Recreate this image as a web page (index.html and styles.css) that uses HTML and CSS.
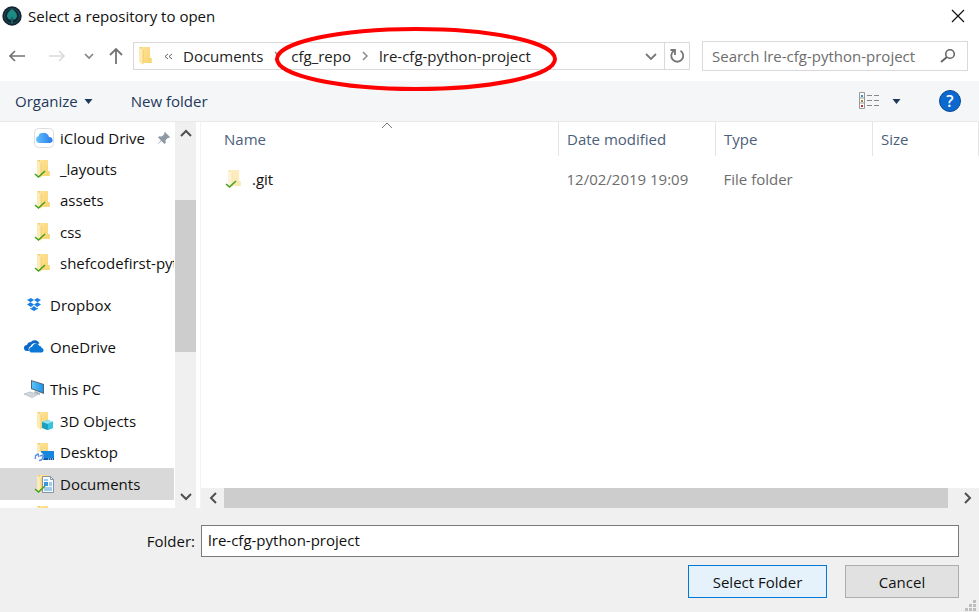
FILE: index.html
```html
<!DOCTYPE html>
<html lang="en">
<head>
<meta charset="utf-8">
<title>Select a repository to open</title>
<link rel="stylesheet" href="styles.css">
</head>
<body>
<svg class="defs" aria-hidden="true">
  <defs>
    <linearGradient id="fold" x1="0" x2="1" y1="0" y2="1"><stop offset="0" stop-color="#ffe29a"/><stop offset="1" stop-color="#f8d46c"/></linearGradient>
    <linearGradient id="cloud" x1="0" x2="1"><stop offset="0" stop-color="#62c0fb"/><stop offset="1" stop-color="#2a7de9"/></linearGradient>
    <linearGradient id="screen" x1="0" x2="1"><stop offset="0" stop-color="#5cc4fa"/><stop offset="1" stop-color="#1e93e8"/></linearGradient>
  </defs>
  <symbol id="folder" viewBox="0 0 20 20">
    <path d="M3 1h11v11h1.500v5H5z" fill="#f3cf70"/>
    <path d="M6 1h8v11h1.500v5H6z" fill="url(#fold)"/>
    <path d="M3 1l4 3v15l-4-3z" fill="#fdebb5"/>
    <path d="M7 4v14" stroke="#edc968" stroke-width=".8"/>
  </symbol>
  <symbol id="tick" viewBox="0 0 20 20"><path d="M1 15l3.500 3 6.500-6" fill="none" stroke="#43a01c" stroke-width="1.500"/></symbol>
</svg>
<div class="dialog">
  <header class="titlebar">
    <svg class="logo" viewBox="0 0 20 20" aria-hidden="true"><circle cx="10" cy="10" r="9.700" fill="#142532"/><circle cx="10" cy="10" r="7.500" fill="none" stroke="#1a5058"/><path d="M10 3c3 2 5 4 5 7 0 2-2 4-4 4v3H9v-3c-2 0-4-2-4-4 0-3 2-5 5-7z" fill="#1c8b83"/><path d="M10 11v6M8 13v3M12 13v3" stroke="#142532" stroke-width=".8"/></svg>
    <h1>Select a repository to open</h1>
    <button class="close" aria-label="Close"><svg width="14" height="14" viewBox="0 0 14 14"><path d="M1 1l12 12M13 1L1 13" fill="none" stroke="#111" stroke-width="1.2"/></svg></button>
  </header>

  <div class="navrow">
    <div class="history">
      <button aria-label="Back"><svg width="18" height="14" viewBox="0 0 18 14"><path d="M17 7H2M7 2L2 7l5 5" fill="none" stroke="#747474" stroke-width="1.7"/></svg></button>
      <button aria-label="Forward"><svg width="18" height="14" viewBox="0 0 18 14"><path d="M1 7h15M11 2l5 5-5 5" fill="none" stroke="#dadada" stroke-width="1.7"/></svg></button>
      <button class="recent" aria-label="Recent locations"><svg width="10" height="8" viewBox="0 0 10 8"><path d="M1 2l4 4 4-4" fill="none" stroke="#858585" stroke-width="1.7"/></svg></button>
      <button class="up" aria-label="Up"><svg width="16" height="18" viewBox="0 0 16 18"><path d="M8 17V2M2 8l6-6 6 6" fill="none" stroke="#747474" stroke-width="1.8"/></svg></button>
    </div>
    <nav class="address" aria-label="Path">
      <svg class="address-icon" viewBox="0 0 20 20" aria-hidden="true"><use href="#folder"/></svg>
      <button class="overflow" aria-label="More folders"><svg width="9" height="7" viewBox="0 0 9 7"><path d="M4 1L1 3.500 4 6M8 1L5 3.500 8 6" fill="none" stroke="#666"/></svg></button>
      <a href="#">Documents</a>
      <svg class="sep" viewBox="0 0 6 10" aria-hidden="true"><path d="M1 1l4 4-4 4" fill="none" stroke="#888" stroke-width="1.5"/></svg>
      <a href="#">cfg_repo</a>
      <svg class="sep" viewBox="0 0 6 10" aria-hidden="true"><path d="M1 1l4 4-4 4" fill="none" stroke="#888" stroke-width="1.5"/></svg>
      <a href="#">lre-cfg-python-project</a>
      <button class="drop" aria-label="Previous locations"><svg width="12" height="9" viewBox="0 0 12 9"><path d="M1 2l5 5 5-5" fill="none" stroke="#777" stroke-width="1.8"/></svg></button>
      <button class="refresh" aria-label="Refresh"><svg width="16" height="16" viewBox="0 0 16 16"><path d="M11.500 2.700a6 6 0 1 1-6.500 0M1.500 2H6v5" fill="none" stroke="#777" stroke-width="1.800"/></svg></button>
      <svg class="highlight" viewBox="0 0 284 64" aria-hidden="true"><ellipse cx="142" cy="32" rx="139" ry="30" fill="none" stroke="#fe0000" stroke-width="4"/></svg>
    </nav>
    <form class="search">
      <input type="text" aria-label="Search" placeholder="Search lre-cfg-python-project">
      <button type="button" aria-label="Search"><svg width="16" height="16" viewBox="0 0 16 16"><circle cx="10" cy="6" r="4.300" fill="none" stroke="#666" stroke-width="1.6"/><path d="M7 9l-6 5" stroke="#666" stroke-width="2"/></svg></button>
    </form>
  </div>

  <div class="toolbar">
    <button class="organize">Organize<svg class="caret" viewBox="0 0 8 5" aria-hidden="true"><path d="M0 0h8L4 5z" fill="#1e395b"/></svg></button>
    <button>New folder</button>
    <button class="view" aria-label="Change view"><svg width="20" height="18" viewBox="0 0 20 18"><path d="M.5.5h5v16h-5zM.5 6h5M.5 11h5" fill="#fff" stroke="#999"/><path d="M2 3h2v2H2z" fill="#3a8cc8"/><path d="M2 8h2v2H2z" fill="#a18a2a"/><path d="M2 13h2v2H2z" fill="#c03030"/><path d="M8 3.500h5M15 3.500h5M8 8.500h5M15 8.500h5M8 13.500h5M15 13.500h5" stroke="#888" stroke-width="1.2"/></svg></button>
    <button class="viewmenu" aria-label="View options"><svg class="caret" viewBox="0 0 8 5"><path d="M0 0h8L4 5z" fill="#1e395b"/></svg></button>
    <button class="help" aria-label="Help">?</button>
  </div>

  <main class="body">
    <nav class="tree" aria-label="Folders">
      <ul class="group children">
        <li><svg class="ico" viewBox="0 0 20 20" aria-hidden="true"><rect x=".5" y=".5" width="19" height="19" rx="4" fill="#fff" stroke="#dedede"/><path d="M5 15a3.500 3.500 0 0 1-.5-6.800A4 4 0 0 1 9 5a5 5 0 0 1 6 4 3 3 0 0 1 1 6z" fill="url(#cloud)"/></svg><a href="#">iCloud Drive</a><svg class="pin" viewBox="0 0 14 14" aria-hidden="true"><path d="M8 1l5 5-1 1-1-.3-2.500 2.500.3 2.500L7.500 13 4.500 10 1 13 .8 12.800 4 9.300 1 6.500 2.300 5.200l2.500.3L7.500 3 7 2z" fill="#8d99a5"/></svg></li>
        <li><svg class="ico" viewBox="0 0 20 20" aria-hidden="true"><use href="#folder"/><use href="#tick"/></svg><a href="#">_layouts</a></li>
        <li><svg class="ico" viewBox="0 0 20 20" aria-hidden="true"><use href="#folder"/><use href="#tick"/></svg><a href="#">assets</a></li>
        <li><svg class="ico" viewBox="0 0 20 20" aria-hidden="true"><use href="#folder"/><use href="#tick"/></svg><a href="#">css</a></li>
        <li><svg class="ico" viewBox="0 0 20 20" aria-hidden="true"><use href="#folder"/><use href="#tick"/></svg><a href="#">shefcodefirst-python</a></li>
      </ul>
      <ul class="group">
        <li><svg class="ico" viewBox="0 0 20 20" aria-hidden="true"><path d="M7 3l3 2-3.500 2.300L3 5zM13 3l4 2-3.500 2.300L10 5zM3 9.500l3.500-2.200L10 9.600 7 12zM17 9.500l-3.500-2.200L10 9.600l3 2.400zM6 12.800l1 .6 3-2.300 3 2.300 1-.6v1L10 16l-4-2.200z" fill="#177fe5"/></svg><a href="#">Dropbox</a></li>
      </ul>
      <ul class="group">
        <li><svg class="ico" viewBox="0 0 20 20" aria-hidden="true"><path d="M5 14H3a3 3 0 0 1 0-6 4 4 0 0 1 4-3 5 5 0 0 1 8.500 1.500L13 7c-3-2-6 0-6 2-2 .5-3 3-2 5z" fill="#0a67c5"/><path d="M8 15.500a2.800 2.800 0 0 1 0-5.600A4 4 0 0 1 15.500 9c2 0 2 1.500 2 2 3 .5 2.500 4.500 0 4.500z" fill="#0a78d7"/></svg><a href="#">OneDrive</a></li>
      </ul>
      <ul class="group">
        <li><svg class="ico" viewBox="0 0 20 20" aria-hidden="true"><path d="M7 1l13 4v10L7 10z" fill="#506574"/><path d="M8 2.200l11 3.500v7.700L8 9.300z" fill="url(#screen)"/><path d="M11 12l5 2v2l-6-2z" fill="#a9b4bb"/><path d="M0 15l6-2 8 2.500-6 3z" fill="#dce2e6" stroke="#a9b4bb" stroke-width=".7"/><path d="M2 15.300l7 2M5 14.300l7 2" stroke="#b7c1c7" stroke-width=".6"/></svg><a href="#">This PC</a></li>
      </ul>
      <ul class="group children after">
        <li><svg class="ico" viewBox="0 0 20 20" aria-hidden="true"><use href="#folder"/><path d="M8 11l6-2 5 2v6l-6 2-5-2z" fill="#1d9fc2"/><path d="M8 11l6-2 5 2-5 2z" fill="#8ee5f3"/><path d="M14 13l5-2v6l-5 2z" fill="#38c1dc"/></svg><a href="#">3D Objects</a></li>
        <li><svg class="ico" viewBox="0 0 20 20" aria-hidden="true"><use href="#folder"/><path d="M7 9h13v9H7z" fill="#1686df"/><path d="M7 16h13v2H7z" fill="#0759a3"/><path d="M14 17h1M16 17h1M18 17h1" stroke="#fff"/><circle cx="5" cy="15" r="5" fill="#fff"/><path d="M1.500 17a4 4 0 0 1 2.500-5M5 18.500a4 4 0 0 0 4-4.500M1 14l3-2 1 3M9.500 16l-.5-3-3 1" fill="none" stroke="#5c8fe0" stroke-width="1.500"/></svg><a href="#">Desktop</a></li>
        <li class="selected"><svg class="ico" viewBox="0 0 20 20" aria-hidden="true"><use href="#folder"/><path d="M8.500 2.500h8l3 3v13h-11z" fill="#f6fbff" stroke="#8496a5"/><path d="M16.500 2.500v3h3" fill="none" stroke="#8496a5"/><path d="M10 8h4v4h-4z" fill="#3b97d9"/><path d="M10 6h4M15 9h3M15 11h3M10 14h8M10 16h8" stroke="#4d9bd5"/><use href="#tick"/></svg><a href="#">Documents</a></li>
        <li><svg class="ico" viewBox="0 0 20 20" aria-hidden="true"><use href="#folder"/></svg></li>
      </ul>
    </nav>
    <div class="vscroll">
      <button aria-label="Scroll up"><svg width="12" height="8" viewBox="0 0 12 8"><path d="M1 7l5-5 5 5" fill="none" stroke="#505050" stroke-width="2"/></svg></button>
      <div class="vtrack"><div class="vthumb"></div></div>
      <button aria-label="Scroll down"><svg width="12" height="8" viewBox="0 0 12 8"><path d="M1 1l5 5 5-5" fill="none" stroke="#505050" stroke-width="2"/></svg></button>
    </div>
    <section class="files">
      <div class="list">
        <table>
          <colgroup><col><col class="mid"><col class="mid"><col class="size"></colgroup>
          <thead><tr><th class="name">Name<svg class="sort" viewBox="0 0 12 7" aria-hidden="true"><path d="M1 6l5-5 5 5" fill="none" stroke="#777"/></svg></th><th>Date modified</th><th>Type</th><th>Size</th></tr></thead>
          <tbody><tr><td class="name"><span class="file"><svg class="ico" viewBox="0 0 20 20" aria-hidden="true"><g opacity=".55"><use href="#folder"/></g><use href="#tick"/></svg>.git</span></td><td>12/02/2019 19:09</td><td>File folder</td><td></td></tr></tbody>
        </table>
      </div>
      <div class="hscroll">
        <button aria-label="Scroll left"><svg width="8" height="12" viewBox="0 0 8 12"><path d="M7 1L2 6l5 5" fill="none" stroke="#505050" stroke-width="2"/></svg></button>
        <div class="hthumb"></div>
        <button aria-label="Scroll right"><svg width="8" height="12" viewBox="0 0 8 12"><path d="M1 1l5 5-5 5" fill="none" stroke="#505050" stroke-width="2"/></svg></button>
      </div>
    </section>
  </main>

  <footer class="footer">
    <div class="field"><label for="folder-name">Folder:</label><input id="folder-name" type="text" value="lre-cfg-python-project"></div>
    <div class="actions"><button class="primary">Select Folder</button><button class="cancel">Cancel</button></div>
    <svg class="grip" viewBox="0 0 12 12" aria-hidden="true"><path d="M8 0h3v3H8zM4 4h3v3H4zM8 4h3v3H8zM0 8h3v3H0zM4 8h3v3H4zM8 8h3v3H8z" fill="#bfbfbf"/></svg>
  </footer>
</div>
</body>
</html>
```
FILE: styles.css
```css
* { box-sizing: border-box; }
body {
  margin: 0;
  font: 15px/20px "Open Sans", "Noto Sans", sans-serif;
  color: #111;
  background: #fff;
}
button {
  border: 0;
  padding: 0;
  background: none;
  font: inherit;
  color: inherit;
  display: flex;
  align-items: center;
  justify-content: center;
}
a { color: inherit; text-decoration: none; }
input { font: inherit; color: inherit; border-radius: 0; outline: 0; }
ul { list-style: none; margin: 0; padding: 0; }
svg { flex: none; }
.defs { position: absolute; width: 0; height: 0; }

.dialog { display: flex; flex-direction: column; height: 100vh; overflow: hidden; }

.titlebar { display: flex; align-items: center; height: 31px; padding: 0 14px 0 2px; flex: none; }
.logo { width: 20px; height: 20px; }
.titlebar h1 { margin: 0 auto 0 6px; font-size: 15px; font-weight: 400; }

.navrow { display: flex; align-items: center; height: 50px; padding: 0 11px 0 8px; flex: none; }
.history { display: flex; align-items: center; width: 125px; }
.history button { width: 18px; margin-right: 22px; }
.history .recent { width: 12px; margin: 0 13px 0 -5px; }
.history .up { width: 16px; margin: 0; }
.address {
  position: relative;
  display: flex;
  align-items: center;
  flex: 1;
  height: 28px;
  border: 1px solid #d9d9d9;
  color: #222;
}
.address-icon { width: 20px; height: 20px; margin-left: 2px; }
.overflow { margin: 0 10px 0 8px; }
.sep { width: 6px; height: 10px; margin: 0 11px; }
.drop { width: 26px; height: 26px; margin-left: auto; }
.refresh { width: 25px; height: 26px; border-left: 1px solid #d9d9d9; }
.highlight { position: absolute; left: 140px; top: -16px; width: 284px; height: 64px; }
.search {
  display: flex;
  align-items: center;
  width: 266px;
  height: 30px;
  margin-left: 12px;
  padding: 0 11px 0 9px;
  border: 1px solid #d9d9d9;
}
.search input { flex: 1; min-width: 0; border: 0; padding: 0; background: none; }
.search input::placeholder { color: #6d6d6d; opacity: 1; }

.toolbar {
  display: flex;
  align-items: center;
  height: 41px;
  padding: 0 18px 0 15px;
  flex: none;
  background: #f5f6f7;
  border-bottom: 1px solid #e8e9ea;
  color: #1e395b;
}
.organize { margin-right: 38px; }
.caret { width: 9px; height: 5px; }
.organize .caret { margin-left: 6px; }
.view { margin-left: auto; }
.viewmenu { margin: 0 38px 0 13px; }
.help {
  width: 22px;
  height: 22px;
  border: 1px solid #0a4a92;
  border-radius: 50%;
  background: #0b68cf;
  color: #fff;
  font-size: 16px;
  font-weight: 600;
}

.body { display: flex; flex: 1; min-height: 0; }
.tree { width: 174px; overflow: hidden; }
.group { display: grid; grid-auto-rows: 32px; margin-bottom: 10px; }
.group li { display: flex; align-items: center; padding-left: 24px; white-space: nowrap; }
.group a { margin-left: 6px; }
.children { grid-auto-rows: 1fr; height: 157px; }
.children li { padding-left: 34px; }
.group:has(+ .after) { margin-bottom: 0; }
.after { height: 126px; }
.ico { width: 20px; height: 20px; }
.pin { width: 14px; height: 14px; margin-left: 12px; }
.selected { background: #d9d9d9; }

.vscroll { display: flex; flex-direction: column; width: 21px; margin: 0 4px 0 1px; background: #f0f0f0; flex: none; }
.vscroll button { height: 22px; }
.vtrack { flex: 1; padding-top: 56px; }
.vthumb { height: 53%; background: #cdcdcd; }

.files { display: flex; flex-direction: column; flex: 1; min-width: 0; border-left: 1px solid #f3f3f3; }
.list { flex: 1; }
table { width: 100%; border-collapse: collapse; table-layout: fixed; }
.mid { width: 157px; }
.size { width: 106px; }
th { height: 34px; padding: 0 8px; font-weight: 400; text-align: left; color: #4c607a; border-right: 1px solid #e5e5e5; }
th.name { position: relative; padding-left: 23px; }
.sort { position: absolute; right: 165px; top: 0; width: 12px; height: 7px; }
td { height: 45px; padding: 0 8px; color: #6d6d6d; }
td.name { padding-left: 24px; color: #111; }
.file { display: flex; align-items: center; gap: 7px; }
.hscroll { display: flex; height: 20px; background: #f0f0f0; }
.hscroll button { width: 23px; }
.hthumb { flex: 1; margin-right: 8px; background: #cdcdcd; }

.footer { position: relative; flex: none; height: 104px; padding: 17px 20px 0 0; background: #f0f0f0; }
.field { display: flex; align-items: center; }
.field label { width: 195px; margin-right: 6px; text-align: right; }
.field input { flex: 1; min-width: 0; height: 32px; padding: 0 6px 2px; border: 1px solid #7a7a7a; background: #fff; }
.actions { display: flex; justify-content: flex-end; gap: 18px; margin-top: 8px; }
.actions button { height: 33px; border: 1px solid #adadad; background: #e1e1e1; }
.actions .primary { width: 139px; border-color: #0078d7; background: #e5f1fb; }
.actions .cancel { width: 114px; }
.grip { position: absolute; right: 2px; bottom: 0; width: 12px; height: 12px; }
```
